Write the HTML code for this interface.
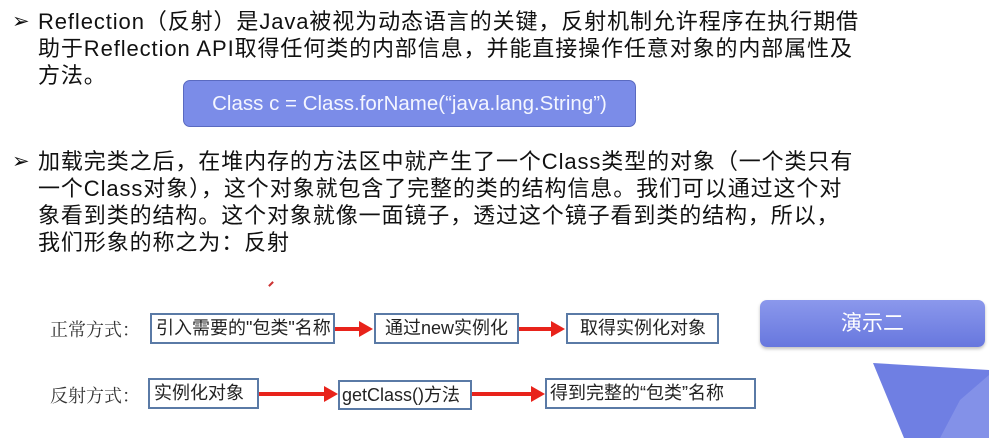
<!DOCTYPE html>
<html><head><meta charset="utf-8"><style>
body{margin:0;width:989px;height:438px;background:#fff;position:relative;overflow:hidden;font-family:"Liberation Sans","Noto Sans CJK SC",sans-serif;color:#111}
.l{position:absolute;left:38px;font-size:22px;letter-spacing:0.9px;white-space:nowrap;line-height:26px}
.b{position:absolute;left:12px;font-size:21px;line-height:26px}
.bx{position:absolute;border:2px solid #5a7aa6;font-size:18px;line-height:27px;padding-left:4px;box-sizing:border-box;white-space:nowrap;color:#222}
.lab{position:absolute;left:50px;font-size:18px;font-family:"Noto Serif CJK SC",serif;color:#333}
.ar{position:absolute;height:4px;background:#e8231b}
.ah{position:absolute;width:0;height:0;border-top:8px solid transparent;border-bottom:8px solid transparent;border-left:14px solid #e8231b}
</style></head><body>
<div class="b" style="top:9px">➢</div>
<div class="l" style="top:9px">Reflection（反射）是Java被视为动态语言的关键，反射机制允许程序在执行期借</div>
<div class="l" style="top:36px">助于Reflection API取得任何类的内部信息，并能直接操作任意对象的内部属性及</div>
<div class="l" style="top:63px">方法。</div>
<div style="position:absolute;left:183px;top:80px;width:453px;height:47px;box-sizing:border-box;background:#7b8ce8;border:1px solid #5a6ac0;border-radius:7px;color:#f4f6ff;font-size:20.5px;text-align:center;line-height:45px">Class c = Class.forName(“java.lang.String”)</div>
<div class="b" style="top:149px">➢</div>
<div class="l" style="top:149px">加载完类之后，在堆内存的方法区中就产生了一个Class类型的对象（一个类只有</div>
<div class="l" style="top:176px">一个Class对象），这个对象就包含了完整的类的结构信息。我们可以通过这个对</div>
<div class="l" style="top:203px">象看到类的结构。这个对象就像一面镜子，透过这个镜子看到类的结构，所以，</div>
<div class="l" style="top:230px">我们形象的称之为：反射</div>
<div style="position:absolute;left:268px;top:283px;width:6px;height:2px;background:#c33;transform:rotate(-45deg)"></div>
<div class="lab" style="top:316px">正常方式：</div>
<div class="lab" style="top:382px">反射方式：</div>
<div class="bx" style="left:150px;top:313px;width:185px;height:31px">引入需要的"包类"名称</div>
<div class="ar" style="left:335px;top:327px;width:25px"></div><div class="ah" style="left:359px;top:321px"></div>
<div class="bx" style="left:374px;top:313px;width:145px;height:31px;padding-left:9px">通过new实例化</div>
<div class="ar" style="left:519px;top:327px;width:33px"></div><div class="ah" style="left:551px;top:321px"></div>
<div class="bx" style="left:566px;top:313px;width:153px;height:31px;padding-left:12px">取得实例化对象</div>
<div class="bx" style="left:148px;top:378px;width:111px;height:31px">实例化对象</div>
<div class="ar" style="left:259px;top:392px;width:66px"></div><div class="ah" style="left:324px;top:386px"></div>
<div class="bx" style="left:338px;top:380px;width:134px;height:30px;padding-left:2px">getClass()方法</div>
<div class="ar" style="left:472px;top:392px;width:60px"></div><div class="ah" style="left:531px;top:386px"></div>
<div class="bx" style="left:545px;top:378px;width:211px;height:31px;padding-left:3px">得到完整的“包类”名称</div>
<div style="position:absolute;left:760px;top:300px;width:225px;height:47px;border-radius:7px;background:linear-gradient(#8b98ec,#6777de);box-shadow:0 2px 3px rgba(0,0,0,.25);color:#fff;font-size:21px;text-align:center;line-height:47px">演示二</div>
<svg style="position:absolute;left:0;top:0" width="989" height="438"><polygon points="873,363 989,370 989,438 904,438" fill="#6f7fe3"/><polygon points="960,400 989,375 989,438 940,438" fill="#8c98ea" opacity=".7"/></svg>
</body></html>
